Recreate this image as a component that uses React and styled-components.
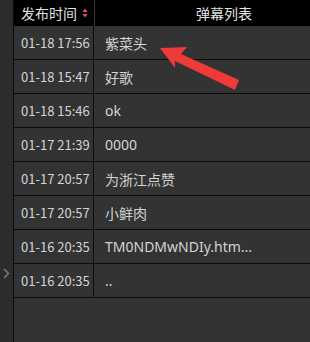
import React from 'react'
import styled, { createGlobalStyle } from 'styled-components'

const rows = [
  { time: '01-18 17:56', text: '紫菜头' },
  { time: '01-18 15:47', text: '好歌' },
  { time: '01-18 15:46', text: 'ok' },
  { time: '01-17 21:39', text: '0000' },
  { time: '01-17 20:57', text: '为浙江点赞' },
  { time: '01-17 20:57', text: '小鲜肉' },
  { time: '01-16 20:35', text: 'TM0NDMwNDIy.htm...' },
  { time: '01-16 20:35', text: '..' },
]

const GlobalStyle = createGlobalStyle`
  html, body {
    margin: 0;
    padding: 0;
    background: #333;
  }
  body {
    font-family: "Noto Sans CJK SC", "Noto Sans", sans-serif;
  }
`

const Page = styled.div`
  display: flex;
  width: 310px;
  height: 342px;
  overflow: hidden;
  position: relative;
  background: #333;
`

const Strip = styled.div`
  width: 14px;
  flex: none;
  background: #2c2c2c;
  border-right: 1px solid #0a0a0a;
  display: flex;
  align-items: flex-start;
  justify-content: center;
  padding-top: 268px;
  box-sizing: border-box;
  color: #7a7a7a;
`

const Table = styled.div`
  flex: 1;
  min-width: 0;
  display: flex;
  flex-direction: column;
`

const HeadRow = styled.div`
  display: grid;
  grid-template-columns: 80px 1px 1fr;
  height: 26px;
  background: #000;
  color: #e2e2e2;
  font-size: 14px;
  line-height: 26px;
`

const HeadCell = styled.div`
  display: flex;
  align-items: center;
  padding-left: ${p => p.$pad || 0}px;
  gap: 5px;
`

const HeadDivider = styled.div`
  background: #3a3a3a;
`

const Row = styled.div`
  display: grid;
  grid-template-columns: 80px 1fr;
  height: 33px;
  border-bottom: 1px solid #0c0c0c;
  background: #333;
  color: #d4d4d4;
`

const TimeCell = styled.div`
  border-right: 1px solid #0c0c0c;
  padding-left: 7px;
  display: flex;
  align-items: center;
  font-size: 13px;
  white-space: nowrap;
`

const TextCell = styled.div`
  padding-left: 11px;
  display: flex;
  align-items: center;
  font-family: "Noto Sans", "Noto Sans CJK SC", sans-serif;
  font-size: 14px;
  white-space: nowrap;
`

const Overlay = styled.svg`
  position: absolute;
  left: 0;
  top: 0;
  pointer-events: none;
`

function SortIcon() {
  return (
    <svg width="6" height="10" viewBox="0 0 6 10">
      <path d="M3 0.5 L5.5 4 L0.5 4 Z" fill="#e0506a" />
      <path d="M3 9.5 L5.5 6 L0.5 6 Z" fill="#e0506a" />
    </svg>
  )
}

function Chevron() {
  return (
    <svg width="7" height="11" viewBox="0 0 7 11">
      <path d="M1 1 L5.5 5.5 L1 10" stroke="#7a7a7a" strokeWidth="1.6" fill="none" />
    </svg>
  )
}

export default function App() {
  return (
    <Page>
      <GlobalStyle />
      <Strip>
        <Chevron />
      </Strip>
      <Table>
        <HeadRow>
          <HeadCell $pad={7}>
            发布时间
            <SortIcon />
          </HeadCell>
          <HeadDivider />
          <HeadCell $pad={101}>弹幕列表</HeadCell>
        </HeadRow>
        {rows.map((r, i) => (
          <Row key={i}>
            <TimeCell>{r.time}</TimeCell>
            <TextCell>{r.text}</TextCell>
          </Row>
        ))}
      </Table>
      <Overlay width="310" height="342">
        <polygon
          points="160,48 187,47 181,54 239,80 235,90 175,61 175,68"
          fill="#ef3a3a"
        />
      </Overlay>
    </Page>
  )
}
